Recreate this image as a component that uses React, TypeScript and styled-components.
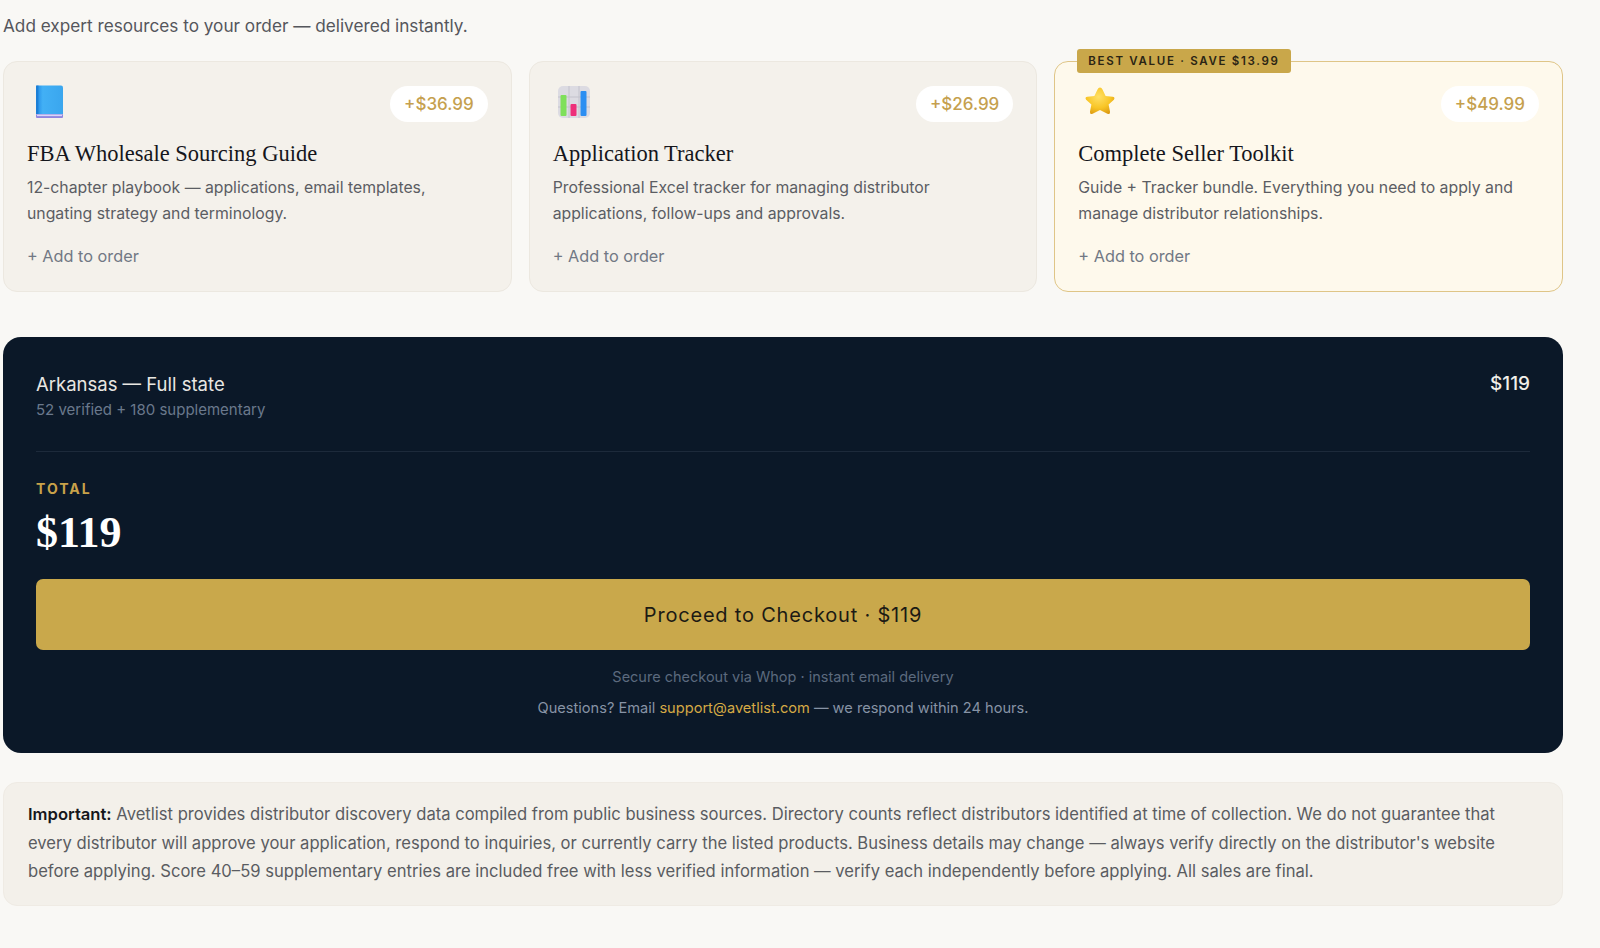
import { createGlobalStyle } from "styled-components";
import styled from "styled-components";

const GlobalStyle = createGlobalStyle`
  html, body {
    margin: 0;
    padding: 0;
    background: #f9f8f5;
    font-family: Inter, "Noto Sans", sans-serif;
    -webkit-font-smoothing: antialiased;
  }
`;

interface Addon {
  id: string;
  icon: "book" | "chart" | "star";
  title: string;
  desc: string;
  price: string;
  badge?: string;
}

const addons: Addon[] = [
  {
    id: "guide",
    icon: "book",
    title: "FBA Wholesale Sourcing Guide",
    desc: "12-chapter playbook — applications, email templates, ungating strategy and terminology.",
    price: "+$36.99",
  },
  {
    id: "tracker",
    icon: "chart",
    title: "Application Tracker",
    desc: "Professional Excel tracker for managing distributor applications, follow-ups and approvals.",
    price: "+$26.99",
  },
  {
    id: "bundle",
    icon: "star",
    title: "Complete Seller Toolkit",
    desc: "Guide + Tracker bundle. Everything you need to apply and manage distributor relationships.",
    price: "+$49.99",
    badge: "BEST VALUE · SAVE $13.99",
  },
];

function BookIcon() {
  return (
    <svg width="34" height="34" viewBox="0 0 34 34">
      <defs>
        <linearGradient id="bk" x1="0" y1="0" x2="1" y2="0">
          <stop offset="0" stopColor="#1e88e5" />
          <stop offset="0.25" stopColor="#42b0f5" />
          <stop offset="1" stopColor="#3aa6ee" />
        </linearGradient>
      </defs>
      <rect x="5" y="29" width="27" height="4" rx="1" fill="#8f86e0" />
      <rect x="6" y="29.5" width="25" height="1.6" fill="#d9d6f7" />
      <path d="M5 2.5 Q5 0.5 7 0.5 L30 0.5 Q32 0.5 32 2.5 L32 29 L5 29 Z" fill="url(#bk)" />
      <rect x="5" y="0.5" width="2.4" height="28.5" fill="#1c7fd6" />
    </svg>
  );
}

function ChartIcon() {
  return (
    <svg width="34" height="34" viewBox="0 0 34 34">
      <rect x="1" y="1" width="32" height="32" rx="5" fill="#dcdbe2" />
      <path d="M1 12 H33 M1 22 H33 M12 1 V33 M22 1 V33" stroke="#c3c2cc" strokeWidth="1" />
      <rect x="3.5" y="10" width="6" height="21" rx="1" fill="#7ee05a" />
      <rect x="13.5" y="19" width="6" height="12" rx="1" fill="#ee2f7a" />
      <rect x="23.5" y="6" width="6" height="25" rx="1" fill="#2b8ef2" />
    </svg>
  );
}

function StarIcon() {
  return (
    <svg width="36" height="34" viewBox="0 0 36 34">
      <defs>
        <radialGradient id="st" cx="0.45" cy="0.35" r="0.7">
          <stop offset="0" stopColor="#ffe066" />
          <stop offset="0.6" stopColor="#f8c526" />
          <stop offset="1" stopColor="#dc9a12" />
        </radialGradient>
      </defs>
      <path
        d="M18 2.5 Q19.6 2.5 20.5 4.6 L23.6 11 L30.6 11.8 Q33.5 12.3 31.9 14.7 L26.6 19.6 L28 26.6 Q28.4 30 25.4 28.8 L18 25 L10.6 28.8 Q7.6 30 8 26.6 L9.4 19.6 L4.1 14.7 Q2.5 12.3 5.4 11.8 L12.4 11 L15.5 4.6 Q16.4 2.5 18 2.5 Z"
        fill="url(#st)"
      />
    </svg>
  );
}

const icons = { book: BookIcon, chart: ChartIcon, star: StarIcon };

export default function App() {
  return (
    <>
      <GlobalStyle />
      <Page>
        <Intro>Add expert resources to your order — delivered instantly.</Intro>

        <AddonGrid>
          {addons.map((a) => {
            const Icon = icons[a.icon];
            return (
              <AddonCard key={a.id} $featured={!!a.badge}>
                {a.badge && <Badge>{a.badge}</Badge>}
                <CardTop>
                  <IconBox>
                    <Icon />
                  </IconBox>
                  <PricePill>{a.price}</PricePill>
                </CardTop>
                <CardTitle>{a.title}</CardTitle>
                <CardDesc>{a.desc}</CardDesc>
                <AddLink>+ Add to order</AddLink>
              </AddonCard>
            );
          })}
        </AddonGrid>

        <Summary>
          <LineItem>
            <div>
              <ItemName>Arkansas — Full state</ItemName>
              <ItemMeta>52 verified + 180 supplementary</ItemMeta>
            </div>
            <ItemPrice>$119</ItemPrice>
          </LineItem>

          <TotalBlock>
            <TotalLabel>TOTAL</TotalLabel>
            <TotalAmount>$119</TotalAmount>
          </TotalBlock>

          <CheckoutButton>Proceed to Checkout · $119</CheckoutButton>

          <SecureNote>Secure checkout via Whop · instant email delivery</SecureNote>
          <ContactNote>
            Questions? Email <Mail>support@avetlist.com</Mail> — we respond within 24 hours.
          </ContactNote>
        </Summary>

        <Disclaimer>
          <strong>Important:</strong> Avetlist provides distributor discovery data compiled from
          public business sources. Directory counts reflect distributors identified at time of
          collection. We do not guarantee that every distributor will approve your application,
          respond to inquiries, or currently carry the listed products. Business details may change
          — always verify directly on the distributor's website before applying. Score 40–59
          supplementary entries are included free with less verified information — verify each
          independently before applying. All sales are final.
        </Disclaimer>
      </Page>
    </>
  );
}

const Page = styled.div`
  width: 1560px;
  padding: 14px 0 40px 3px;
  display: flex;
  flex-direction: column;
`;

const Intro = styled.p`
  margin: 0 0 23px;
  font-size: 17.2px;
  line-height: 24px;
  color: #55565c;
`;

const AddonGrid = styled.div`
  display: grid;
  grid-template-columns: repeat(3, 1fr);
  gap: 17px;
  margin-bottom: 45px;
`;

const AddonCard = styled.div<{ $featured: boolean }>`
  position: relative;
  display: flex;
  flex-direction: column;
  padding: 24px 23px 24px;
  height: 231px;
  box-sizing: border-box;
  border-radius: 14px;
  background: ${(p) => (p.$featured ? "#fef9ec" : "#f4f1eb")};
  border: 1px solid ${(p) => (p.$featured ? "#dfc587" : "#ece8e0")};
`;

const Badge = styled.span`
  position: absolute;
  top: -13px;
  left: 22px;
  padding: 4px 11px;
  background: #c9a74a;
  color: #2a2414;
  font-size: 11.5px;
  font-weight: 600;
  letter-spacing: 1.7px;
  line-height: 16px;
  border-radius: 3px;
`;

const CardTop = styled.div`
  display: flex;
  justify-content: space-between;
  align-items: flex-start;
  height: 36px;
`;

const IconBox = styled.div`
  display: flex;
  align-items: center;
  padding-left: 4px;
  margin-top: -1px;
`;

const PricePill = styled.span`
  background: #ffffff;
  color: #c5a04e;
  font-size: 17px;
  font-weight: 500;
  line-height: 36px;
  padding: 0 14px;
  border-radius: 18px;
`;

const CardTitle = styled.h3`
  margin: 17px 0 6px;
  font-family: "Liberation Serif", "DejaVu Serif", serif;
  font-weight: 400;
  font-size: 22.5px;
  line-height: 30px;
  color: #15161c;
`;

const CardDesc = styled.p`
  margin: 0 0 19px;
  max-width: 445px;
  font-size: 15.8px;
  line-height: 25.5px;
  color: #5b5d63;
`;

const AddLink = styled.span`
  font-size: 16.3px;
  line-height: 22px;
  color: #717884;
`;

const Summary = styled.section`
  background: #0b1828;
  border-radius: 18px;
  padding: 35px 33px 34px;
  display: flex;
  flex-direction: column;
`;

const LineItem = styled.div`
  display: flex;
  justify-content: space-between;
  align-items: flex-start;
  padding-bottom: 31px;
  border-bottom: 1px solid #1d2a3b;
`;

const ItemName = styled.div`
  font-size: 18.5px;
  line-height: 24px;
  color: #e9e7e2;
`;

const ItemMeta = styled.div`
  margin-top: 4px;
  font-size: 15px;
  line-height: 20px;
  color: #6a788c;
`;

const ItemPrice = styled.div`
  font-size: 19px;
  line-height: 24px;
  font-weight: 500;
  color: #f1efe9;
`;

const TotalBlock = styled.div`
  padding-top: 28px;
  margin-bottom: 20px;
`;

const TotalLabel = styled.div`
  font-size: 14px;
  line-height: 18px;
  font-weight: 700;
  letter-spacing: 2px;
  color: #c9a24a;
`;

const TotalAmount = styled.div`
  margin-top: 9px;
  font-family: "Liberation Serif", "DejaVu Serif", serif;
  font-weight: 700;
  font-size: 44px;
  line-height: 52px;
  color: #ffffff;
`;

const CheckoutButton = styled.button`
  height: 71px;
  border: none;
  border-radius: 7px;
  background: #c9a84b;
  color: #1c1a14;
  font-family: Inter, "Noto Sans", sans-serif;
  font-size: 20px;
  letter-spacing: 0.8px;
  cursor: pointer;
  margin-bottom: 17px;
`;

const SecureNote = styled.div`
  text-align: center;
  font-size: 14.5px;
  line-height: 20px;
  color: #5c6a7e;
  margin-bottom: 10px;
`;

const ContactNote = styled.div`
  text-align: center;
  font-size: 14.6px;
  line-height: 22px;
  color: #8793a5;
`;

const Mail = styled.span`
  color: #d6aa45;
`;

const Disclaimer = styled.p`
  margin: 29px 0 0;
  padding: 17px 28px 19px 24px;
  background: #f3f0ea;
  border: 1px solid #efebe4;
  border-radius: 14px;
  font-size: 16.6px;
  line-height: 28.5px;
  color: #5a5c61;

  strong {
    font-weight: 600;
    color: #15161a;
  }
`;
